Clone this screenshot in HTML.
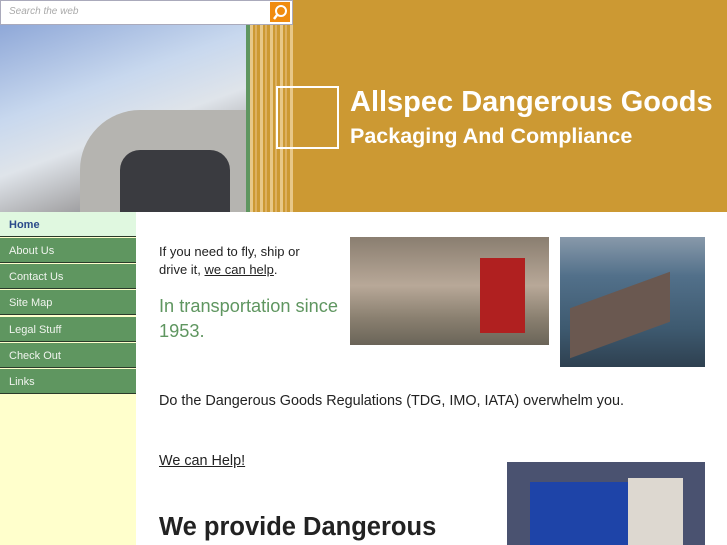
<!DOCTYPE html>
<html><head><style>
*{margin:0;padding:0}
body{width:727px;height:545px;overflow:hidden;background:#fff;font-family:"Liberation Sans",sans-serif;position:relative}
.a{position:absolute}
.nav div{position:absolute;left:0;width:136px;height:25px;border-bottom:1px solid #2a3a2a;background:#5f9660;color:#f0f4ee;font-size:11px;line-height:26px;padding-left:9px;box-sizing:border-box}
</style></head><body>
<div class="a" style="left:0;top:0;width:727px;height:212px;background:#cc9933"></div>
<div class="a" style="left:0;top:0;width:293px;height:25px;background:#fff;border:1px solid #aab;box-sizing:border-box"></div>
<div class="a" style="left:9px;top:6px;font-size:10px;font-style:italic;color:#aaa">Search the web</div>
<div class="a" style="left:270px;top:2px;width:20px;height:20px;background:#f08c10"></div>
<svg class="a" style="left:270px;top:2px" width="20" height="20"><circle cx="11" cy="9" r="5" fill="none" stroke="#fff" stroke-width="2"/><line x1="7" y1="13" x2="4" y2="17" stroke="#fff" stroke-width="2.5"/></svg>
<div class="a" style="left:0;top:25px;width:246px;height:187px;background:linear-gradient(160deg,#8fa8d8 0%,#c8d8ee 35%,#dfe4ea 55%,#a9a9ab 75%,#5c5f70 100%)"></div>
<div class="a" style="left:80px;top:110px;width:166px;height:102px;background:#b5b4b0;border-radius:60px 0 0 0"></div>
<div class="a" style="left:120px;top:150px;width:110px;height:62px;background:#3a3b40;border-radius:20px 20px 0 0"></div>
<div class="a" style="left:246px;top:25px;width:4px;height:187px;background:#5f9660"></div>
<div class="a" style="left:250px;top:25px;width:43px;height:187px;background:repeating-linear-gradient(90deg,#e8c888 0 3px,#cc9933 3px 5px,#ddb060 5px 7px,#cc9933 7px 10px)"></div>
<div class="a" style="left:276px;top:86px;width:63px;height:63px;border:2px solid #fff;box-sizing:border-box"></div>
<div class="a" style="left:350px;top:86px;font-size:29px;font-weight:bold;color:#fff;white-space:nowrap">Allspec Dangerous Goods</div>
<div class="a" style="left:350px;top:124px;font-size:21.5px;font-weight:bold;color:#fff;white-space:nowrap">Packaging And Compliance</div>
<div class="a" style="left:0;top:212px;width:136px;height:333px;background:#ffffcc"></div>
<div class="nav">
<div style="top:212px;background:#e0f8e0;color:#2a4a8a;font-weight:bold">Home</div>
<div style="top:238px">About Us</div>
<div style="top:264px">Contact Us</div>
<div style="top:290px">Site Map</div>
<div style="top:317px">Legal Stuff</div>
<div style="top:343px">Check Out</div>
<div style="top:369px">Links</div>
</div>
<div class="a" style="left:159px;top:243px;font-size:13px;line-height:18px;color:#222">If you need to fly, ship or<br>drive it, <u>we can help</u>.</div>
<div class="a" style="left:159px;top:294px;font-size:18.2px;line-height:25px;color:#5f9660;white-space:nowrap">In transportation since<br>1953.</div>
<div class="a" style="left:350px;top:237px;width:199px;height:108px;background:linear-gradient(180deg,#8a7e70 0%,#b8a898 45%,#8a8070 75%,#6a6458 100%)"></div>
<div class="a" style="left:480px;top:258px;width:45px;height:75px;background:#b02020"></div>
<div class="a" style="left:560px;top:237px;width:145px;height:130px;background:linear-gradient(180deg,#8899aa 0%,#52708a 30%,#3e5a70 70%,#2e4050 100%)"></div>
<div class="a" style="left:570px;top:290px;width:100px;height:50px;background:#6a5850;transform:skewY(-20deg)"></div>
<div class="a" style="left:159px;top:393px;font-size:14.4px;color:#222;white-space:nowrap">Do the Dangerous Goods Regulations (TDG, IMO, IATA) overwhelm you.</div>
<div class="a" style="left:159px;top:453px;font-size:14.4px;color:#222"><u>We can Help!</u></div>
<div class="a" style="left:159px;top:513px;font-size:25.5px;font-weight:bold;color:#222;white-space:nowrap">We provide Dangerous</div>
<div class="a" style="left:507px;top:462px;width:198px;height:83px;background:#4a5270"></div>
<div class="a" style="left:530px;top:482px;width:100px;height:63px;background:#1e44a8"></div>
<div class="a" style="left:628px;top:478px;width:55px;height:67px;background:#ddd8d0"></div>
</body></html>
